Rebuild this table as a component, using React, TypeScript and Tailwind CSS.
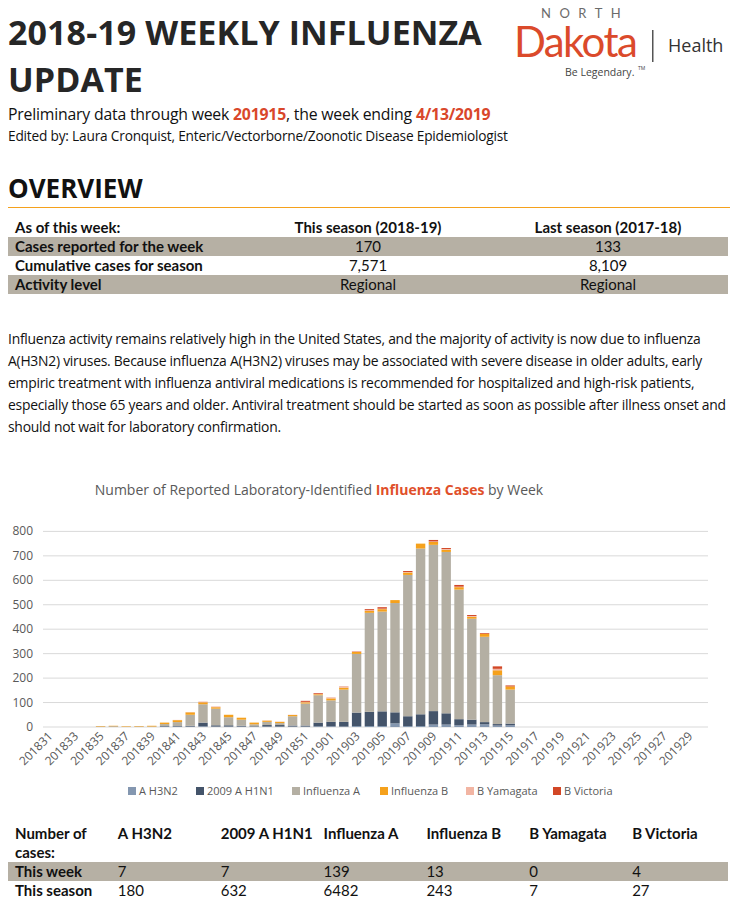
import React from "react"

// [A H3N2, 2009 A H1N1, Influenza A, Influenza B, B Yamagata, B Victoria]
const weeks: number[][] = [
  [0, 0, 0, 0, 0, 0], [0, 0, 0, 0, 0, 0], [0, 0, 0, 0, 0, 0], [0, 0, 0, 0, 0, 0],
  [0, 0, 2, 2, 0, 0], [0, 1, 2, 2, 0, 0], [0, 0, 1, 2, 0, 0], [0, 0, 2, 2, 0, 0],
  [0, 0, 2, 3, 0, 0], [2, 2, 8, 6, 0, 0], [2, 2, 16, 8, 1, 0], [2, 3, 45, 10, 1, 0],
  [3, 15, 75, 8, 1, 1], [2, 5, 68, 6, 3, 0], [2, 5, 33, 10, 0, 0], [2, 3, 25, 8, 0, 0],
  [1, 2, 8, 7, 0, 0], [2, 6, 13, 5, 1, 0], [2, 6, 8, 5, 1, 0], [2, 4, 38, 5, 1, 0],
  [2, 4, 90, 5, 2, 4], [3, 15, 112, 4, 2, 3], [3, 18, 88, 8, 2, 1], [2, 19, 132, 8, 4, 1],
  [4, 55, 240, 8, 2, 1], [4, 58, 405, 8, 3, 4], [4, 60, 408, 10, 2, 6], [15, 45, 447, 12, 0, 0],
  [4, 40, 578, 10, 2, 4], [4, 48, 678, 20, 0, 0], [10, 55, 680, 12, 2, 6], [10, 46, 660, 9, 3, 4],
  [7, 25, 530, 10, 2, 7], [10, 20, 413, 8, 3, 4], [11, 9, 349, 12, 0, 3], [6, 6, 200, 20, 6, 10],
  [7, 7, 139, 13, 0, 4],
]

const colors = ["#8497B0", "#44546A", "#B4AFA3", "#F5A11C", "#F2B5A3", "#D24726"]
const legend = ["A H3N2", "2009 A H1N1", "Influenza A", "Influenza B", "B Yamagata", "B Victoria"]
const legendX = [128, 196, 292, 380, 466, 553]

const labels: string[] = []
for (let w = 31; w <= 52; w += 2) labels.push("2018" + w)
for (let w = 1; w <= 29; w += 2) labels.push("2019" + String(w).padStart(2, "0"))

const X0 = 43
const STEP = 12.8
const Y0 = 257
const K = 0.2445

function Logo() {
  return (
    <svg width="215" height="82" viewBox="0 0 215 82">
      <text x="31" y="16" fontSize="13" letterSpacing="8.5" fill="#6b6b6b" fontFamily="Lato, sans-serif">NORTH</text>
      <text x="4" y="55" fontSize="42" letterSpacing="-1.6" fill="#DB4A2B" fontFamily="Lato, sans-serif">Dakota</text>
      <rect x="142" y="28" width="1.5" height="32" fill="#555" />
      <text x="158" y="50" fontSize="18" fill="#333" fontFamily="'Open Sans', sans-serif">Health</text>
      <text x="55" y="74" fontSize="10.5" fill="#444" fontFamily="'Open Sans', sans-serif">Be Legendary.</text>
      <text x="128" y="68" fontSize="5" fill="#444" fontFamily="'Open Sans', sans-serif">TM</text>
    </svg>
  )
}

function Chart() {
  return (
    <svg width="745" height="335" viewBox="0 0 745 335" className="block">
      <text x="319" y="25" textAnchor="middle" fontSize="14" fill="#595959" fontFamily="'Open Sans', sans-serif">
        Number of Reported Laboratory-Identified <tspan fontWeight="700" fill="#E0502A">Influenza Cases</tspan> by Week
      </text>
      {[0, 100, 200, 300, 400, 500, 600, 700, 800].map((v) => (
        <g key={v}>
          <line x1={X0} x2={708} y1={Y0 - v * K} y2={Y0 - v * K} stroke="#D9D9D9" strokeWidth="1" />
          <text x="33" y={Y0 - v * K + 4} textAnchor="end" fontSize="12" fill="#595959" fontFamily="'Open Sans', sans-serif">
            {v}
          </text>
        </g>
      ))}
      {weeks.map((stack, i) => {
        let acc = 0
        const x = X0 + STEP * i + 1.7
        return (
          <g key={i}>
            {stack.map((val, j) => {
              if (!val) return null
              const y = Y0 - (acc + val) * K
              acc += val
              return <rect key={j} x={x} y={y} width={9.4} height={val * K} fill={colors[j]} />
            })}
          </g>
        )
      })}
      {labels.map((l, i) => {
        const cx = X0 + STEP * (i * 2 + 0.5) + 4
        return (
          <text
            key={l}
            x={cx}
            y={267}
            textAnchor="end"
            fontSize="12"
            fill="#595959"
            fontFamily="'Open Sans', sans-serif"
            transform={`rotate(-45 ${cx} 267)`}
          >
            {l}
          </text>
        )
      })}
      {legend.map((l, i) => (
        <g key={l}>
          <rect x={legendX[i]} y={317} width="8" height="8" fill={colors[i]} />
          <text x={legendX[i] + 11} y={325} fontSize="11" fill="#595959" fontFamily="'Open Sans', sans-serif">
            {l}
          </text>
        </g>
      ))}
    </svg>
  )
}

export default function App() {
  const para = [
    "Influenza activity remains relatively high in the United States, and the majority of activity is now due to influenza",
    "A(H3N2) viruses. Because influenza A(H3N2) viruses may be associated with severe disease in older adults, early",
    "empiric treatment with influenza antiviral medications is recommended for hospitalized and high-risk patients,",
    "especially those 65 years and older. Antiviral treatment should be started as soon as possible after illness onset and",
    "should not wait for laboratory confirmation.",
  ]

  const bottom = [
    ["This week", "7", "7", "139", "13", "0", "4"],
    ["This season", "180", "632", "6482", "243", "7", "27"],
  ]

  return (
    <div className="w-[745px] bg-white text-[#222] font-['Open_Sans',sans-serif]">
      <div className="flex justify-between pl-[8px] pr-[20px]">
        <h1 className="pt-[9px] text-[34px] leading-[47px] font-bold text-[#262626] tracking-[0.1px]">
          2018-19 WEEKLY INFLUENZA
          <br />
          UPDATE
        </h1>
        <div className="pt-[2px]">
          <Logo />
        </div>
      </div>

      <div className="px-[8px]">
        <p className="text-[15.8px] leading-[22px] text-[#111] tracking-[-0.2px]">
          Preliminary data through week <span className="font-bold text-[#D9472B]">201915</span>, the week ending{" "}
          <span className="font-bold text-[#D9472B]">4/13/2019</span>
        </p>
        <p className="text-[13.7px] leading-[22px] text-[#111] tracking-[-0.2px]">
          Edited by: Laura Cronquist, Enteric/Vectorborne/Zoonotic Disease Epidemiologist
        </p>

        <h2 className="mt-[25px] text-[26px] leading-[32px] font-bold text-[#111] pb-[3px] border-b border-[#F5A11C] mr-[7px]">
          OVERVIEW
        </h2>

        <div className="mt-[10px] w-[720px] font-['Lato',sans-serif] text-[15px] leading-[19px] text-[#111]">
          <div className="grid grid-cols-[240px_240px_240px] font-bold">
            <div className="pl-[7px]">As of this week:</div>
            <div className="text-center">This season (2018-19)</div>
            <div className="text-center">Last season (2017-18)</div>
          </div>
          <div className="grid grid-cols-[240px_240px_240px] bg-[#B6B0A4]">
            <div className="pl-[7px] font-bold">Cases reported for the week</div>
            <div className="text-center">170</div>
            <div className="text-center">133</div>
          </div>
          <div className="grid grid-cols-[240px_240px_240px]">
            <div className="pl-[7px] font-bold">Cumulative cases for season</div>
            <div className="text-center">7,571</div>
            <div className="text-center">8,109</div>
          </div>
          <div className="grid grid-cols-[240px_240px_240px] bg-[#B6B0A4]">
            <div className="pl-[7px] font-bold">Activity level</div>
            <div className="text-center">Regional</div>
            <div className="text-center">Regional</div>
          </div>
        </div>

        <div className="mt-[34px] text-[13.9px] leading-[22px] text-[#111] tracking-[-0.25px]">
          {para.map((line) => (
            <div key={line} className="whitespace-nowrap">
              {line}
            </div>
          ))}
        </div>
      </div>

      <div className="mt-[32px]">
        <Chart />
      </div>

      <div className="px-[8px] mt-[19px] w-[736px] font-['Lato',sans-serif] text-[15px] leading-[19px] text-[#111]">
        <div className="grid grid-cols-7 font-bold">
          {["Number of cases:", ...legend].map((h, k) => (
            <div key={h} className={`pl-[7px] pr-[4px] ${k > 0 ? "whitespace-nowrap" : ""}`}>
              {h}
            </div>
          ))}
        </div>
        {bottom.map((row, r) => (
          <div key={row[0]} className={`grid grid-cols-7 ${r === 0 ? "bg-[#B6B0A4]" : ""}`}>
            {row.map((c, k) => (
              <div key={k} className={`pl-[7px] ${k === 0 ? "font-bold" : ""}`}>
                {c}
              </div>
            ))}
          </div>
        ))}
      </div>
    </div>
  )
}
